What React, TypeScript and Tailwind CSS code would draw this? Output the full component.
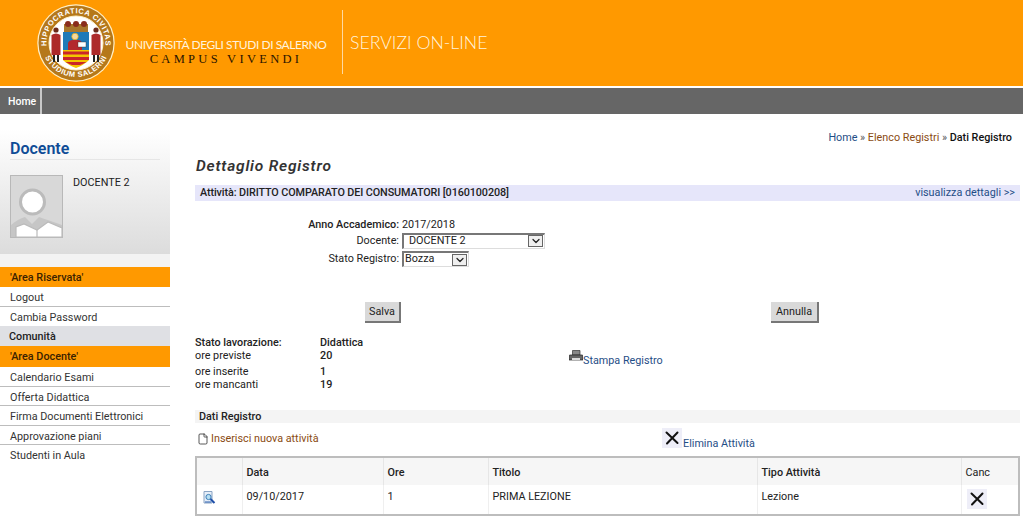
import { ChevronDown, File } from 'lucide-react';

const font = { fontFamily: 'Roboto, sans-serif' };

function Seal() {
  return (
    <svg width="78" height="78" viewBox="0 0 78 78" className="shrink-0">
      <defs>
        <path id="sealTop" d="M 13.5 53.7 A 29.5 29.5 0 1 1 64.5 53.7" />
        <path id="sealBottom" d="M 5 39 A 34 34 0 0 0 73 39" />
      </defs>
      <circle cx="39" cy="39" r="38.7" fill="#fff0c8" />
      <circle cx="39" cy="39" r="37.5" fill="#b5781a" />
      <circle cx="39" cy="39" r="27" fill="#fff" stroke="#fff0c8" />
      <text fill="#fff" fontSize="7.5" fontWeight="700" letterSpacing="0.55" fontFamily="Liberation Sans, sans-serif">
        <textPath href="#sealTop" startOffset="50%" textAnchor="middle">HIPPOCRATICA CIVITAS</textPath>
      </text>
      <text fill="#fff" fontSize="7.5" fontWeight="700" letterSpacing="0.55" fontFamily="Liberation Sans, sans-serif">
        <textPath href="#sealBottom" startOffset="50%" textAnchor="middle">STUDIUM SALERNI</textPath>
      </text>
      {/* towers */}
      <rect x="27" y="20" width="24" height="8" fill="#a8772c" />
      <circle cx="31" cy="20" r="3" fill="#8a2c1c" />
      <circle cx="39" cy="20" r="3" fill="#8a2c1c" />
      <circle cx="47" cy="20" r="3" fill="#8a2c1c" />
      {/* shield */}
      <path d="M26 28 H52 V56 Q47 61 39 64 Q31 61 26 56 Z" fill="#f4c400" />
      <rect x="26" y="28" width="26" height="18" fill="#1f7ab8" />
      <path d="M31 46 V39 Q32 36 36 36 H41 Q44 36 45 39 V46 Z" fill="#b3282d" />
      <circle cx="38" cy="32.5" r="3.2" fill="#f3d9a0" stroke="#e0b020" strokeWidth="0.8" />
      <rect x="41" y="38" width="8" height="5" fill="#fff" stroke="#333" strokeWidth="0.4" />
      <rect x="26" y="47.5" width="26" height="3" fill="#c9252b" />
      <rect x="26" y="53" width="26" height="3" fill="#c9252b" />
      <path d="M28.5 58 H49.5 Q46 60 43 61 H35 Q32 60 28.5 58 Z" fill="#c9252b" />
      {/* side figures */}
      <circle cx="19" cy="26" r="2.6" fill="#6d2a1a" />
      <path d="M14.5 31 Q19 28 23.5 31 V51 H14.5 Z" fill="#ad2a2a" />
      <rect x="16" y="51" width="2" height="7" fill="#222" />
      <rect x="20" y="51" width="2" height="7" fill="#222" />
      <circle cx="59" cy="26" r="2.6" fill="#6d2a1a" />
      <path d="M54.5 31 Q59 28 63.5 31 V51 H54.5 Z" fill="#ad2a2a" />
      <rect x="56" y="51" width="2" height="7" fill="#222" />
      <rect x="60" y="51" width="2" height="7" fill="#222" />
    </svg>
  );
}

function Avatar() {
  return (
    <svg width="53" height="63" viewBox="0 0 53 63" className="shrink-0">
      <rect x="0.5" y="0.5" width="52" height="62" fill="#d8d8d8" stroke="#b8b8b8" />
      <circle cx="22.5" cy="27" r="12" fill="#fff" stroke="#bbb" strokeWidth="3" />
      <path d="M1 62 V50 Q8 44 15 42 L22 49 L29 42 Q38 45 52 50 V62 Z" fill="#c6c6c6" />
      <path d="M6 62 V52 L14 49 L27 55 L38 47 L52 53 V62 Z" fill="#fff" stroke="#bbb" strokeWidth="1.2" />
      <path d="M27 55 V62" stroke="#bbb" strokeWidth="1.2" />
    </svg>
  );
}

function CloseIcon() {
  return (
    <svg width="20" height="20" viewBox="0 0 20 20" className="bg-[#eeeef8]">
      <path d="M4.5 4.5 L15.5 15 M15.5 4.5 L5 15.5" stroke="#111" strokeWidth="2" strokeLinecap="round" />
    </svg>
  );
}

function PrinterIcon() {
  return (
    <svg width="14" height="13" viewBox="0 0 14 13">
      <path d="M3.5 0.5 H11 V5 H3.5 Z" fill="#888" stroke="#333" strokeWidth="0.7" />
      <path d="M1 5 H13 Q14 5 14 6 V10 H0 V6 Q0 5 1 5 Z" fill="#666" stroke="#222" strokeWidth="0.7" />
      <rect x="3" y="8" width="8" height="2" fill="#ddd" />
    </svg>
  );
}

function ViewIcon() {
  return (
    <svg width="13" height="13" viewBox="0 0 13 13">
      <path d="M1 0.5 H9 V12 H1 Z" fill="#e6eef8" stroke="#8aa4c4" />
      <circle cx="5.5" cy="6" r="2.6" fill="#b7dff3" stroke="#3d7fb8" />
      <path d="M7.5 8 L11.5 12" stroke="#1f4fa8" strokeWidth="2" />
      <path d="M2 11 H8" stroke="#2a5fae" />
    </svg>
  );
}

function MenuItem({ label, last }: { label: string; last?: boolean }) {
  return (
    <div className={`h-[19.5px] pl-[10px] leading-[21px] text-[#333] ${last ? '' : 'border-b border-[#bdbdbd]'}`}>
      {label}
    </div>
  );
}

function SelectBox({ label, width, pad }: { label: string; width: string; pad: string }) {
  return (
    <div className={`flex h-[16px] items-center justify-between border-t-2 border-l-2 border-r border-b border-t-[#777] border-l-[#777] border-r-[#ddd] border-b-[#ddd] bg-white pr-[1px] ${width} ${pad}`}>
      <span>{label}</span>
      <span className="flex h-[12px] w-[15px] items-center justify-center border border-[#666] bg-[#efefef]">
        <ChevronDown size={12} strokeWidth={2.5} color="#222" />
      </span>
    </div>
  );
}

function Sidebar() {
  return (
    <aside className="w-[170px] shrink-0 pt-[15px]">
      <div className="h-[125px] bg-gradient-to-b from-white to-[#dcdcdc] px-[10px]">
        <h2 className="h-[31px] border-b border-[#e6e6e6] text-[16px] font-semibold leading-[40px] text-[#0f4c96]">Docente</h2>
        <div className="mt-[15px] flex gap-[10px]">
          <Avatar />
          <span className="leading-[15px] text-[#222]">DOCENTE 2</span>
        </div>
      </div>
      <div className="h-[13px] bg-[#f3f3f3]" />
      <div className="h-[20px] bg-[#ff9900] pl-[10px] font-medium leading-[21px] text-[#3a2200]">'Area Riservata'</div>
      <MenuItem label="Logout" />
      <MenuItem label="Cambia Password" last />
      <div className="h-[20px] bg-[#dfe0e4] pl-[9px] font-medium leading-[21px] text-[#222]">Comunità</div>
      <div className="h-[21px] bg-[#ff9900] pl-[10px] font-medium leading-[22px] text-[#3a2200]">'Area Docente'</div>
      <MenuItem label="Calendario Esami" />
      <MenuItem label="Offerta Didattica" />
      <MenuItem label="Firma Documenti Elettronici" />
      <MenuItem label="Approvazione piani" />
      <MenuItem label="Studenti in Aula" last />
    </aside>
  );
}

function ActivityTable() {
  const th = 'border-r border-[#e6e6e6] pl-[4px] pt-[3px] text-left font-medium';
  const td = 'border-r border-[#efefef] pl-[4px] align-top pt-[4px]';
  return (
    <table className="mt-[6px] h-[60px] w-[825px] table-fixed border-collapse border-2 border-[#bdbdbd] text-[#222]">
      <thead>
        <tr className="h-[28px] bg-[#f6f6f6]">
          <th className={`${th} w-[46px]`} />
          <th className={`${th} w-[141px]`}>Data</th>
          <th className={`${th} w-[105px]`}>Ore</th>
          <th className={`${th} w-[269px]`}>Titolo</th>
          <th className={`${th} w-[204px]`}>Tipo Attività</th>
          <th className="pl-[4px] pt-[3px] text-left font-normal">Canc</th>
        </tr>
      </thead>
      <tbody>
        <tr>
          <td className={td}><span className="ml-[2px] mt-[2px] block"><ViewIcon /></span></td>
          <td className={td}>09/10/2017</td>
          <td className={td}>1</td>
          <td className={td}>PRIMA LEZIONE</td>
          <td className={td}>Lezione</td>
          <td className="pl-[5px] align-top pt-[4px]"><CloseIcon /></td>
        </tr>
      </tbody>
    </table>
  );
}

export default function App() {
  return (
    <div className="h-[525px] w-[1023px] overflow-hidden bg-white text-[10.8px]" style={font}>
      <header className="flex h-[86px] items-center bg-[#ff9900] pl-[37px]">
        <Seal />
        <div className="ml-[10px] mt-[17px] w-[202px] shrink-0 text-center" style={{ fontFamily: '"Lato", sans-serif' }}>
          <div className="whitespace-nowrap text-[12px] leading-[15px] tracking-[-0.44px] text-[#fff3dc]">UNIVERSITÀ DEGLI STUDI DI SALERNO</div>
          <div className="whitespace-nowrap text-[12.5px] leading-[14px] tracking-[3.3px] text-[#2a1500]" style={{ fontFamily: '"Liberation Serif", serif' }}>CAMPUS VIVENDI</div>
        </div>
        <div className="ml-[15px] mt-[-2px] h-[64px] w-px bg-[#ffd9a0]" />
        <div className="ml-[7px] text-[17.7px] font-light text-[#fff3dc]" style={{ fontFamily: '"Lato", sans-serif' }}>SERVIZI ON-LINE</div>
      </header>

      <nav className="mt-[2px] flex h-[26px] bg-[#666666]">
        <div className="w-[42px] border-r-2 border-[#c8c8c8] pl-[8px] text-[10.5px] font-medium leading-[27px] text-white">Home</div>
      </nav>

      <div className="flex">
        <Sidebar />
        <main className="ml-[25px] w-[825px]">
          <div className="mt-[16px] pr-[8px] text-right leading-[15px]">
            <span className="text-[#1f4e86]">Home</span>
            <span className="text-[#555]"> » </span>
            <span className="text-[#8a4b12]">Elenco Registri</span>
            <span className="text-[#555]"> » </span>
            <span className="font-medium text-[#111]">Dati Registro</span>
          </div>

          <h1 className="mt-[9px] h-[31px] pl-[1px] text-[15.5px] font-semibold italic leading-[24px] tracking-[0.8px] text-[#333]">Dettaglio Registro</h1>

          <div className="flex h-[16px] items-center justify-between bg-[#e6e6fa] pl-[5px] pr-[5px] text-[#222]">
            <span className="font-medium tracking-[-0.1px]">Attività: DIRITTO COMPARATO DEI CONSUMATORI [0160100208]</span>
            <span className="text-[#1f4e86]">visualizza dettagli &gt;&gt;</span>
          </div>

          <div className="mt-[16px] grid grid-cols-[204px_1fr] items-center gap-x-[3px] text-[#222]">
            <span className="h-[15px] text-right font-medium leading-[15px]">Anno Accademico:</span>
            <span className="leading-[15px]">2017/2018</span>
            <span className="h-[17px] text-right leading-[17px]">Docente:</span>
            <SelectBox label="DOCENTE 2" width="w-[143px]" pad="pl-[5px]" />
            <span className="mt-[1px] h-[18px] text-right leading-[18px]">Stato Registro:</span>
            <div className="mt-[1px]">
              <SelectBox label="Bozza" width="w-[67px]" pad="pl-[1px]" />
            </div>
          </div>

          <div className="mt-[34px] flex text-[#222]">
            <button className="ml-[170px] h-[21px] w-[36px] border-r-2 border-b-2 border-[#777] bg-[#d9d9d9] pt-[2px]">Salva</button>
            <button className="ml-[370px] h-[21px] w-[48px] border-r-2 border-b-2 border-[#777] bg-[#d9d9d9] pt-[2px]">Annulla</button>
          </div>

          <div className="mt-[13px] flex text-[#222]">
            <div className="grid w-[374px] grid-cols-[125px_1fr] leading-[13px]">
              <span className="font-medium">Stato lavorazione:</span>
              <span className="font-medium">Didattica</span>
              <span>ore previste</span>
              <span className="font-medium">20</span>
              <span className="mt-[3px]">ore inserite</span>
              <span className="mt-[3px] font-medium">1</span>
              <span>ore mancanti</span>
              <span className="font-medium">19</span>
            </div>
            <div className="mt-[14px] flex items-start text-[#1f4e86]">
              <PrinterIcon />
              <span className="mt-[3px]">Stampa Registro</span>
            </div>
          </div>

          <div className="mt-[19px] h-[13px] bg-[#f4f4f4] pl-[4px] font-medium leading-[13px] text-[#222]">Dati Registro</div>

          <div className="mt-[5px] flex h-[22px] items-end">
            <div className="flex w-[467px] items-center self-center pl-[2px] text-[#8a4b12]">
              <File size={12} color="#222" strokeWidth={1.5} />
              <span className="ml-[2px]">Inserisci nuova attività</span>
            </div>
            <div className="flex h-full items-end text-[#1f4e86]">
              <span className="self-start"><CloseIcon /></span>
              <span className="ml-[1px] leading-[13px]">Elimina Attività</span>
            </div>
          </div>

          <ActivityTable />
        </main>
      </div>
    </div>
  );
}
